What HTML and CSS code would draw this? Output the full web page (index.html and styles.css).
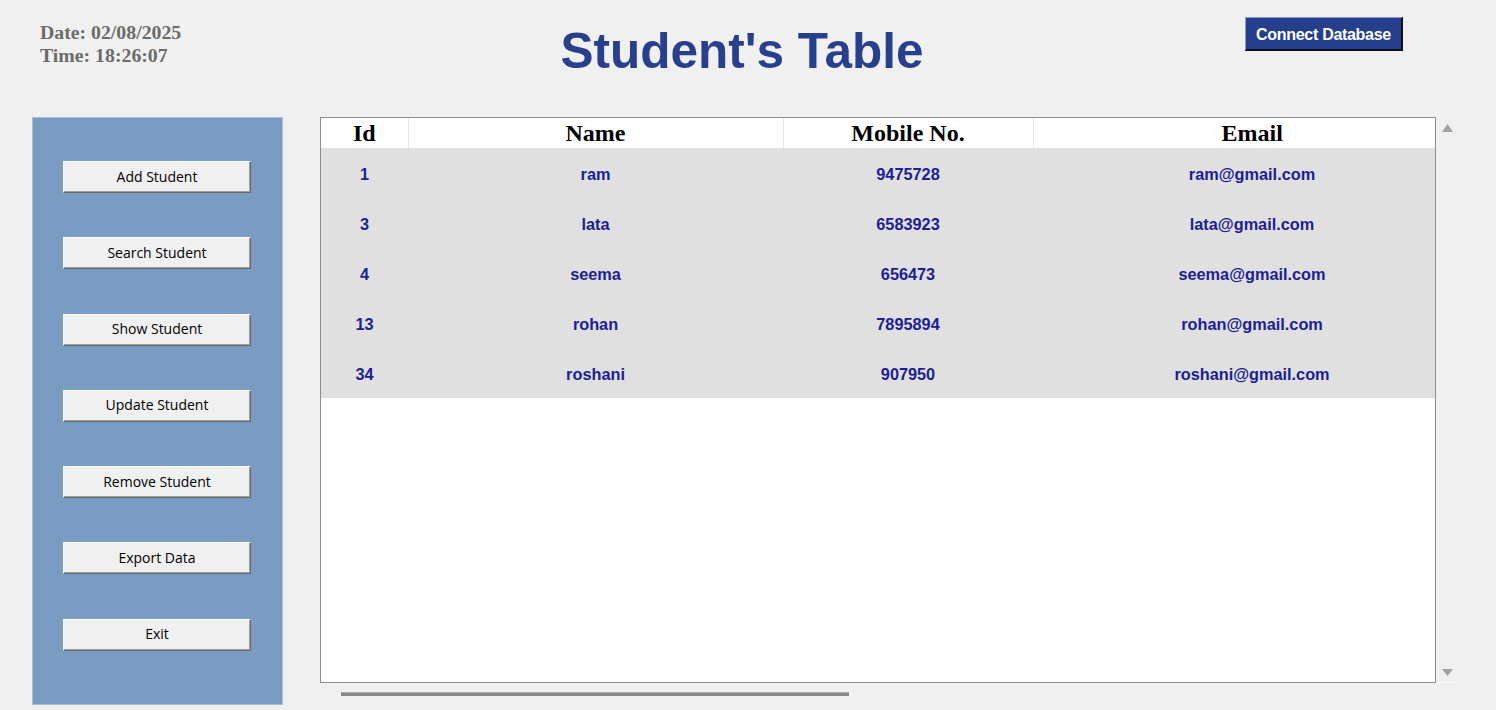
FILE: index.html
```html
<!DOCTYPE html>
<html>
<head>
<meta charset="utf-8">
<title>Student's Table</title>
<link rel="stylesheet" href="styles.css">
</head>
<body>
<div class="app">
  <header class="header">
    <div class="clock">
      <div>Date: 02/08/2025</div>
      <div>Time: 18:26:07</div>
    </div>
    <h1 class="title">Student's Table</h1>
    <div class="connect-wrap">
      <button class="connect">Connect Database</button>
    </div>
  </header>
  <main class="main">
    <nav class="sidebar">
      <button class="side-btn">Add Student</button>
      <button class="side-btn">Search Student</button>
      <button class="side-btn">Show Student</button>
      <button class="side-btn">Update Student</button>
      <button class="side-btn">Remove Student</button>
      <button class="side-btn">Export Data</button>
      <button class="side-btn">Exit</button>
    </nav>
    <section class="table-area">
      <div class="table-row">
        <div class="frame">
          <table class="grid">
            <colgroup>
              <col class="c-id"><col class="c-name"><col class="c-mobile"><col class="c-email">
            </colgroup>
            <thead>
              <tr><th>Id</th><th>Name</th><th>Mobile No.</th><th>Email</th></tr>
            </thead>
            <tbody>
              <tr><td>1</td><td>ram</td><td>9475728</td><td>ram@gmail.com</td></tr>
              <tr><td>3</td><td>lata</td><td>6583923</td><td>lata@gmail.com</td></tr>
              <tr><td>4</td><td>seema</td><td>656473</td><td>seema@gmail.com</td></tr>
              <tr><td>13</td><td>rohan</td><td>7895894</td><td>rohan@gmail.com</td></tr>
              <tr><td>34</td><td>roshani</td><td>907950</td><td>roshani@gmail.com</td></tr>
            </tbody>
          </table>
        </div>
        <div class="vscroll">
          <svg class="arrow" width="11" height="8" viewBox="0 0 11 8"><polygon points="5.5,0 11,8 0,8" fill="#a3a3a3"/></svg>
          <svg class="arrow" width="11" height="7" viewBox="0 0 11 7"><polygon points="0,0 11,0 5.5,7" fill="#a3a3a3"/></svg>
        </div>
      </div>
      <div class="hscroll"><div class="thumb"></div></div>
    </section>
  </main>
</div>
</body>
</html>
```
FILE: styles.css
```css
html, body {
  margin: 0;
  padding: 0;
}
body {
  background: #f0f0f0;
  width: 1496px;
  height: 710px;
  overflow: hidden;
}
.app {
  width: 1496px;
  height: 710px;
}
.header {
  height: 117px;
  display: flex;
  align-items: flex-start;
}
.clock {
  width: 260px;
  padding-left: 40px;
  padding-top: 21px;
  font-family: "Liberation Serif", "Times New Roman", serif;
  font-weight: bold;
  font-size: 19.8px;
  line-height: 23px;
  color: #6b6b6b;
}
.title {
  flex: 1;
  margin: 0;
  padding-top: 22px;
  text-align: center;
  font-family: "Liberation Sans", Arial, sans-serif;
  font-weight: bold;
  font-size: 49.5px;
  line-height: normal;
  color: #283f8d;
}
.connect-wrap {
  width: 312px;
  display: flex;
  justify-content: flex-end;
  padding-right: 93px;
  box-sizing: border-box;
  padding-top: 17px;
}
.connect {
  width: 158px;
  height: 34px;
  box-sizing: border-box;
  background: #263f8c;
  color: #ffffff;
  font-family: "Liberation Sans", Arial, sans-serif;
  font-weight: bold;
  font-size: 16px;
  letter-spacing: -0.3px;
  border-top: 1px solid #8d9bc4;
  border-left: 1px solid #8d9bc4;
  border-right: 2px solid #111111;
  border-bottom: 2px solid #111111;
  padding: 2px 0 0 0;
  margin: 0;
}
.main {
  display: flex;
  align-items: flex-start;
  padding-left: 32px;
  gap: 37px;
}
.sidebar {
  width: 251px;
  height: 588px;
  box-sizing: border-box;
  background: #7b9cc2;
  border: 1px solid #aac0d8;
  display: flex;
  flex-direction: column;
  align-items: center;
  padding-top: 43px;
  gap: 44.3px;
}
.side-btn {
  width: 188px;
  height: 32px;
  box-sizing: border-box;
  margin: 0 0 0 -1px;
  padding: 0 0 2px 0;
  background: #f0f0f0;
  border-top: 1px solid #ffffff;
  border-left: 1px solid #ffffff;
  border-right: 1px solid #696969;
  border-bottom: 1px solid #696969;
  box-shadow: inset -1px -1px 0 #a0a0a0;
  font-family: "Open Sans", "Noto Sans", sans-serif;
  font-size: 14px;
  color: #000000;
}
.table-area {
  display: flex;
  flex-direction: column;
}
.table-row {
  display: flex;
  align-items: flex-start;
}
.frame {
  width: 1116px;
  height: 566px;
  box-sizing: border-box;
  border: 1px solid #8a8d96;
  background: #ffffff;
  overflow: hidden;
}
.grid {
  border-collapse: collapse;
  table-layout: fixed;
  width: 1150px;
}
.c-id { width: 87px; }
.c-name { width: 375px; }
.c-mobile { width: 250px; }
.c-email { width: 438px; }
.grid th {
  height: 30px;
  padding: 0;
  background: #ffffff;
  font-family: "Liberation Serif", "Times New Roman", serif;
  font-weight: bold;
  font-size: 24px;
  line-height: 30px;
  color: #000000;
  text-align: center;
  border-left: 1px solid #e6e6e6;
}
.grid th:first-child {
  border-left: none;
}
.grid td {
  height: 50px;
  box-sizing: border-box;
  padding: 3px 0 0 0;
  background: #e0e0e0;
  font-family: "Liberation Sans", Arial, sans-serif;
  font-weight: bold;
  font-size: 16.3px;
  color: #1d1d96;
  text-align: center;
}
.vscroll {
  width: 21px;
  height: 566px;
  box-sizing: border-box;
  border-bottom: 1px solid #fbfbfb;
  display: flex;
  flex-direction: column;
  justify-content: space-between;
  align-items: center;
  padding: 7px 0 6px 0;
  margin-left: 1px;
}
.arrow {
  display: block;
}
.hscroll {
  padding-left: 21px;
  padding-top: 9px;
}
.thumb {
  width: 508px;
  height: 3px;
  background: #8a8a8a;
  border-top: 1px solid #b0b0b0;
}
```
